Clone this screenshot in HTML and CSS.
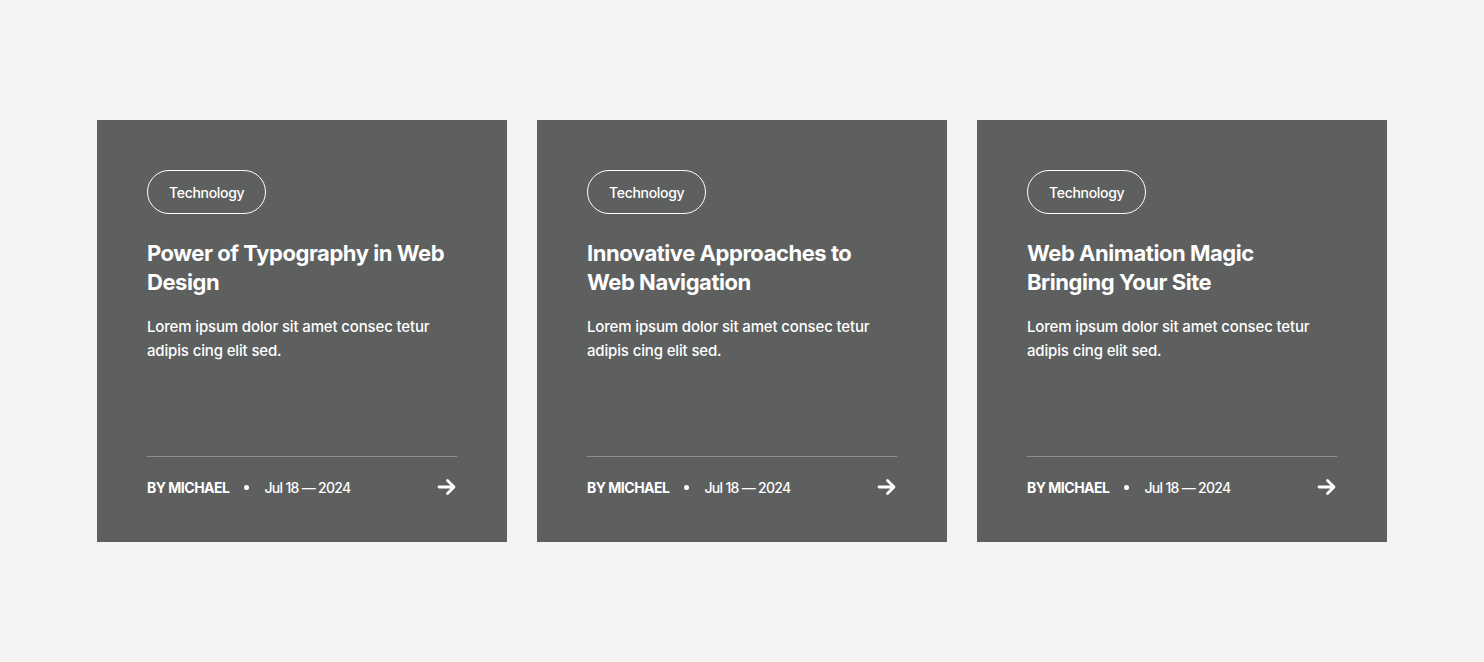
FILE: index.html
```html
<!DOCTYPE html>
<html lang="en">
<head>
<meta charset="utf-8">
<title>Blog cards</title>
<link rel="stylesheet" href="styles.css">
</head>
<body>
<main class="grid">
  <article class="card">
    <span class="tag">Technology</span>
    <h2 class="title">Power of Typography in Web Design</h2>
    <p class="desc">Lorem ipsum dolor sit amet consec tetur adipis cing elit sed.</p>
    <div class="footer">
      <span class="author">BY MICHAEL</span>
      <span class="dot"></span>
      <span class="date">Jul 18 — 2024</span>
      <svg class="arrow" viewBox="0 0 20 20" width="20" height="20"><path d="M2 10H17M10.5 3.5L17 10L10.5 16.5" fill="none" stroke="#fff" stroke-width="2.8" stroke-linecap="round" stroke-linejoin="round"/></svg>
    </div>
  </article>
  <article class="card">
    <span class="tag">Technology</span>
    <h2 class="title">Innovative Approaches to Web Navigation</h2>
    <p class="desc">Lorem ipsum dolor sit amet consec tetur adipis cing elit sed.</p>
    <div class="footer">
      <span class="author">BY MICHAEL</span>
      <span class="dot"></span>
      <span class="date">Jul 18 — 2024</span>
      <svg class="arrow" viewBox="0 0 20 20" width="20" height="20"><path d="M2 10H17M10.5 3.5L17 10L10.5 16.5" fill="none" stroke="#fff" stroke-width="2.8" stroke-linecap="round" stroke-linejoin="round"/></svg>
    </div>
  </article>
  <article class="card">
    <span class="tag">Technology</span>
    <h2 class="title">Web Animation Magic Bringing Your Site</h2>
    <p class="desc">Lorem ipsum dolor sit amet consec tetur adipis cing elit sed.</p>
    <div class="footer">
      <span class="author">BY MICHAEL</span>
      <span class="dot"></span>
      <span class="date">Jul 18 — 2024</span>
      <svg class="arrow" viewBox="0 0 20 20" width="20" height="20"><path d="M2 10H17M10.5 3.5L17 10L10.5 16.5" fill="none" stroke="#fff" stroke-width="2.8" stroke-linecap="round" stroke-linejoin="round"/></svg>
    </div>
  </article>
</main>
</body>
</html>
```
FILE: styles.css
```css
* { box-sizing: border-box; }
html, body { margin: 0; padding: 0; }
body {
  background: #f4f4f4;
  font-family: Inter, "Noto Sans", sans-serif;
  color: #fff;
  height: 662px;
}
.grid {
  display: flex;
  justify-content: center;
  gap: 30px;
  padding-top: 120px;
}
.card {
  width: 410px;
  height: 422px;
  background: #5e605f;
  padding: 50px 50px 45px;
  display: flex;
  flex-direction: column;
  align-items: flex-start;
}
.tag {
  display: inline-flex;
  align-items: center;
  justify-content: center;
  height: 44px;
  padding: 0 21px;
  border: 1px solid #fff;
  border-radius: 22px;
  font-size: 14px;
  font-weight: 500;
  letter-spacing: -0.3px;
}
.title {
  margin: 25px 0 0;
  font-size: 22px;
  line-height: 29px;
  font-weight: 700;
  letter-spacing: -0.45px;
  max-width: 305px;
}
.desc {
  margin: 18px 0 0;
  font-size: 15px;
  line-height: 24px;
  font-weight: 500;
  letter-spacing: -0.15px;
}
.footer {
  margin-top: auto;
  width: 100%;
  border-top: 1px solid rgba(255,255,255,0.3);
  padding-top: 20px;
  display: flex;
  align-items: center;
  box-sizing: content-box;
  height: 20px;
  font-size: 14px;
}
.author {
  font-weight: 700;
  letter-spacing: -0.5px;
}
.dot {
  width: 5px;
  height: 5px;
  border-radius: 50%;
  background: #fff;
  margin: 0 15px;
}
.date {
  font-weight: 500;
  letter-spacing: -0.7px;
}
.arrow {
  margin-left: auto;
}
```
